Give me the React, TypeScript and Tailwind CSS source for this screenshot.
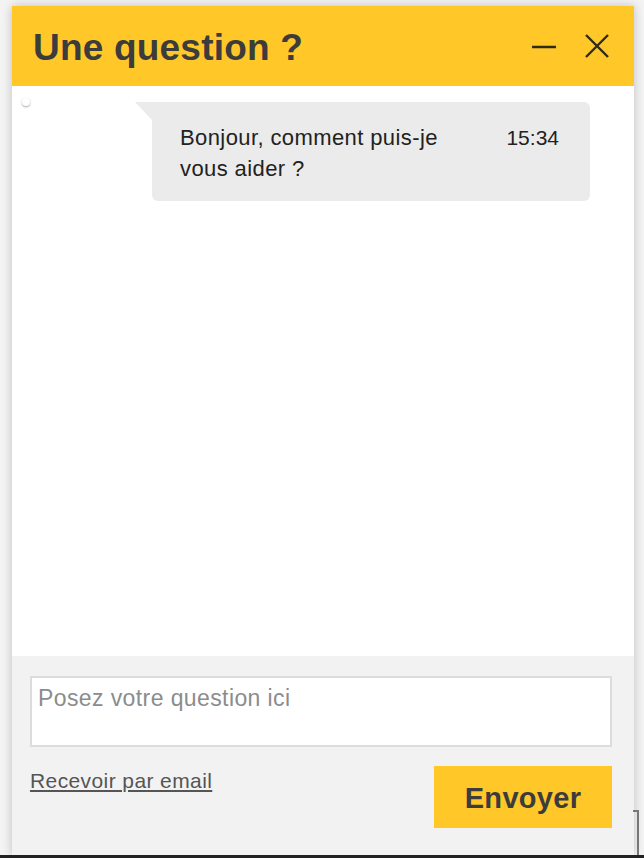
import React from "react";

export default function App() {
  return (
    <div
      className="relative h-[858px] w-[644px] flex flex-col bg-white overflow-hidden"
      style={{ fontFamily: '"Liberation Sans", Arial, sans-serif' }}
    >
      <div className="flex-1 flex pt-[6px] pl-[12px] pr-[10px] bg-[#f4f4f4]">
        <div className="flex-1 flex flex-col bg-white shadow-[0_0_10px_rgba(0,0,0,0.22)]">
          {/* Header */}
          <div className="h-[80px] shrink-0 bg-[#ffc828] flex items-center pl-[21px] pr-[25px]">
            <h1 className="flex-1 pt-[3px] text-[37px] leading-[40px] font-bold text-[#3c3c3c] tracking-[0.2px]">
              Une question ?
            </h1>
            <div className="flex items-center gap-[29px]">
              <button className="w-[24px] h-[24px] flex items-center justify-center">
                <svg width="24" height="24" viewBox="0 0 24 24">
                  <line x1="0" y1="13" x2="24" y2="13" stroke="#2e2a1c" strokeWidth="2.5" />
                </svg>
              </button>
              <button className="w-[24px] h-[24px] flex items-center justify-center">
                <svg width="24" height="24" viewBox="0 0 24 24">
                  <path d="M1 1 L23 23 M23 1 L1 23" stroke="#2e2a1c" strokeWidth="2.4" fill="none" />
                </svg>
              </button>
            </div>
          </div>

          {/* Messages */}
          <div className="relative flex-1 bg-white pt-[16px]">
            <div className="absolute left-[10px] top-[12px] w-[8px] h-[8px] rounded-full bg-white shadow-[0_1px_2px_rgba(0,0,0,0.35)]" />
            <div className="flex pl-[140px] pr-[44px]">
              <div className="relative flex-1 bg-[#ebebeb] rounded-[6px] rounded-tl-none pl-[28px] pr-[31px] pt-[20px] pb-[17px] flex items-start justify-between">
                <svg
                  className="absolute left-[-17px] top-0"
                  width="17"
                  height="18"
                  viewBox="0 0 17 18"
                >
                  <polygon points="0,0 17,0 17,18" fill="#ebebeb" />
                </svg>
                <p className="w-[290px] text-[22px] leading-[31px] text-[#222] tracking-[0.4px]">
                  Bonjour, comment puis-je vous aider ?
                </p>
                <span className="text-[21px] leading-[31px] text-[#222]">15:34</span>
              </div>
            </div>
          </div>

          {/* Footer */}
          <div className="h-[199px] shrink-0 bg-[#f2f2f2] pt-[20px] pl-[18px] pr-[22px]">
            <textarea
              className="block w-full h-[71px] bg-white border-2 border-[#dcdcdc] resize-none outline-none pl-[6px] pt-[8px] text-[23px] leading-[25px] tracking-[0.4px] text-[#333] placeholder:text-[#8c8c8c]"
              placeholder="Posez votre question ici"
            />
            <div className="flex items-start justify-between mt-[19px]">
              <a
                href="#"
                className="mt-[3px] text-[21px] leading-[23px] text-[#555] underline tracking-[0.4px]"
              >
                Recevoir par email
              </a>
              <button className="w-[178px] h-[62px] bg-[#ffc828] flex items-center justify-center pt-[2px]">
                <span className="text-[29px] leading-[32px] font-bold text-[#3c3c3c] tracking-[0.3px]">
                  Envoyer
                </span>
              </button>
            </div>
          </div>
        </div>
      </div>
      <div className="h-[3px] shrink-0 bg-[#222]" />
      <div className="absolute left-[633px] top-[810px] w-[6px] h-[45px] border-t-2 border-r-2 border-[#777]" />
    </div>
  );
}
